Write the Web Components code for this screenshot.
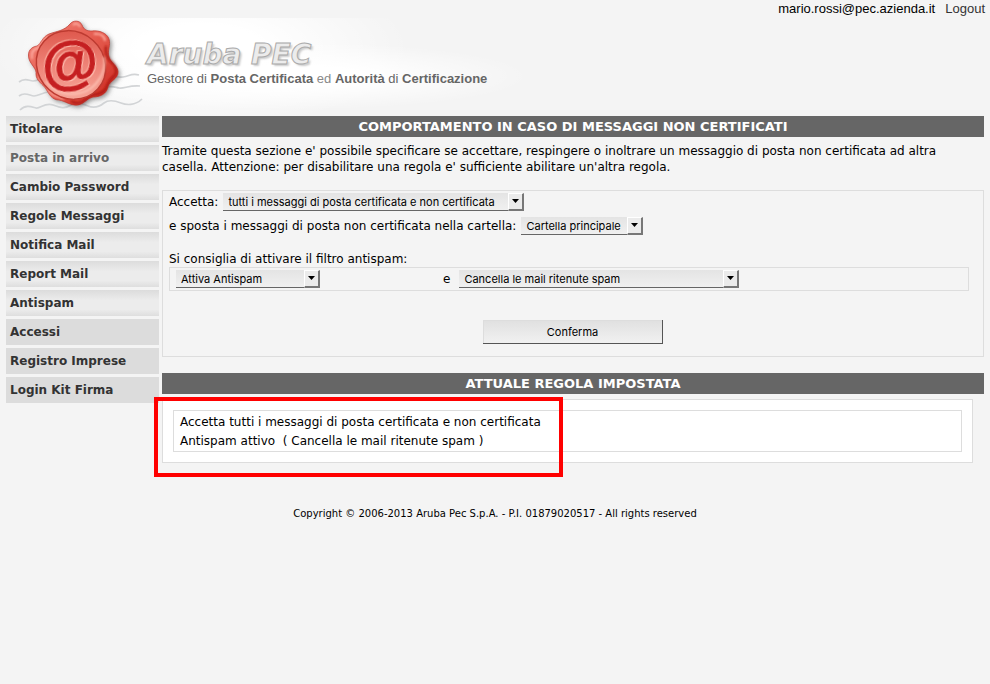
<!DOCTYPE html>
<html lang="it">
<head>
<meta charset="utf-8">
<title>Aruba PEC - Messaggi non certificati</title>
<style>
  body {
    margin: 0;
    background: #f4f4f4;
    color: #000;
    font: 12px/16px Verdana, "DejaVu Sans", sans-serif;
  }
</style>
</head>
<body>

<pec-page>
  <pec-header slot="header" user="mario.rossi@pec.azienda.it"></pec-header>

  <pec-menu slot="menu">
    <pec-menu-item>Titolare</pec-menu-item>
    <pec-menu-item current>Posta in arrivo</pec-menu-item>
    <pec-menu-item>Cambio Password</pec-menu-item>
    <pec-menu-item>Regole Messaggi</pec-menu-item>
    <pec-menu-item>Notifica Mail</pec-menu-item>
    <pec-menu-item>Report Mail</pec-menu-item>
    <pec-menu-item>Antispam</pec-menu-item>
    <pec-menu-item flat>Accessi</pec-menu-item>
    <pec-menu-item flat>Registro Imprese</pec-menu-item>
    <pec-menu-item flat>Login Kit Firma</pec-menu-item>
  </pec-menu>

  <pec-section heading="COMPORTAMENTO IN CASO DI MESSAGGI NON CERTIFICATI">
    <pec-rule-form>
      Tramite questa sezione e' possibile specificare se accettare, respingere o inoltrare un messaggio di posta non certificata ad altra casella. Attenzione: per disabilitare una regola e' sufficiente abilitare un'altra regola.
    </pec-rule-form>
  </pec-section>

  <pec-section heading="ATTUALE REGOLA IMPOSTATA">
    <pec-current-rule>
      <div>Accetta tutti i messaggi di posta certificata e non certificata</div>
      <div>Antispam attivo &nbsp;( Cancella le mail ritenute spam )</div>
    </pec-current-rule>
  </pec-section>

  <span slot="footer">Copyright © 2006-2013 Aruba Pec S.p.A. - P.I. 01879020517 - All rights reserved</span>
</pec-page>

<script>
(function() {

  /**
   * Builds a <template> from a string of markup.
   */
  function html(markup) {
    const template = document.createElement('template');
    template.innerHTML = markup;
    return template;
  }


  /**
   * Base class: attaches an open shadow root and clones the template of the element into it.
   */
  class PecElement extends HTMLElement {
    constructor() {
      super();
      this.attachShadow({ mode: 'open' });
      this.shadowRoot.appendChild(this.constructor.template.content.cloneNode(true));
    }

    $(selector) {
      return this.shadowRoot.querySelector(selector);
    }
  }


  class PecPage extends PecElement {}

  PecPage.template = html(`
    <style>
      :host {
        display: block;
      }
      .columns {
        display: grid;
        grid-template-columns: 153px 1fr;
        gap: 3px;
        padding: 0 6px;
      }
      main {
        display: flex;
        flex-direction: column;
        gap: 16px;
        min-width: 0;
      }
      footer {
        margin-top: 43px;
        text-align: center;
        font-size: 10px;
      }
    </style>
    <slot name="header"></slot>
    <div class="columns">
      <slot name="menu"></slot>
      <main><slot></slot></main>
    </div>
    <footer><slot name="footer"></slot></footer>
  `);


  class PecHeader extends PecElement {
    connectedCallback() {
      this.$('.user').textContent = this.getAttribute('user');
    }
  }

  PecHeader.template = html(`
    <style>
      :host {
        display: block;
        font-family: Arial, "Liberation Sans", sans-serif;
      }
      .account {
        display: flex;
        justify-content: flex-end;
        gap: 10px;
        padding: 1px 5px;
        font-size: 13px;
      }
      .account a {
        color: #333;
        text-decoration: none;
      }
      .brand {
        display: flex;
        gap: 2px;
        height: 98px;
        padding-left: 18px;
        background:
          radial-gradient(240px 34px at 290px 58px, #fff 30%, transparent) no-repeat,
          radial-gradient(210px 80px at 200px 30px, #fff 30%, transparent) no-repeat;
      }
      .name {
        margin: 23px 0 0;
        font: italic bold 28px/28px "DejaVu Sans", sans-serif;
        color: #ececec;
        -webkit-text-stroke: 1px #aaa;
        text-shadow: 2px 2px 2px #ccc;
      }
      .motto {
        margin: 2px 0 0;
        color: #666;
        font-size: 13px;
      }
      .motto span {
        color: #888;
      }
    </style>
    <div class="account">
      <span class="user"></span>
      <a href="#logout">Logout</a>
    </div>
    <div class="brand">
      <pec-seal></pec-seal>
      <div>
        <h1 class="name">Aruba PEC</h1>
        <p class="motto">Gestore di <b>Posta Certificata</b> <span>ed</span> <b>Autorità</b> di <b>Certificazione</b></p>
      </div>
    </div>
  `);


  /**
   * Red wax seal over the waves of a postmark.
   */
  class PecSeal extends PecElement {}

  PecSeal.template = html(`
    <style>
      :host {
        display: block;
        flex: none;
        width: 127px;
        height: 98px;
      }
      svg {
        display: block;
      }
      text {
        fill: #c51f21;
        stroke: #c51f21;
        stroke-width: 1px;
        font: bold 58px Arial, "Liberation Sans", sans-serif;
        filter: drop-shadow(1px 1px 0 #ffc1b3) drop-shadow(-1px -1px 0 #f9ab9c);
      }
    </style>
    <svg width="127" height="98" viewBox="18 18 127 98" aria-hidden="true">
      <defs>
        <linearGradient id="wax" x1="0" y1="0" x2="1" y2="1">
          <stop offset="0" stop-color="#f3857a"/>
          <stop offset=".5" stop-color="#e4594c"/>
          <stop offset="1" stop-color="#c8231a"/>
        </linearGradient>
        <linearGradient id="dish" x1="0" y1="0" x2="1" y2="1">
          <stop offset="0" stop-color="#d8473c"/>
          <stop offset=".5" stop-color="#ee8377"/>
          <stop offset="1" stop-color="#fab6a8"/>
        </linearGradient>
        <filter id="drop" x="-20%" y="-20%" width="150%" height="150%">
          <feDropShadow dx="2" dy="2" stdDeviation="2" flood-color="#555" flood-opacity=".6"/>
        </filter>
        <filter id="soft"><feGaussianBlur stdDeviation="1.2"/></filter>
      </defs>
      <g fill="none" stroke="#d2d4d6" stroke-width="1.7">
        <path d="M19 82c6-5 10-1 14-1s6-2 9-3M19 96c6-5 11 0 15 0s8-3 14-4M20 110c6-6 12-3 16-2s9-6 17-3 12 4 18 0 12-1 17 1 11 1 16-3 12-2 17 0 14 3 21-4"/>
        <path d="M104 88c6-3 10-1 15 0s10-3 21-2M106 77c7-3 10 1 17 0s8-4 16-2"/>
      </g>
      <path filter="url(#drop)" fill="url(#wax)" stroke="#b9362c" stroke-width=".7" d="M70 24C73 20 80 20 82 25C84 30 87 31 92 31C99 30 107 33 109 39C111 45 107 51 109 57C110 62 118 66 118 72C118 79 110 81 108 86C107 94 100 97 93 97C87 98 84 104 78 105C71 106 65 101 59 100C52 100 49 94 46 89C43 84 36 81 36 74C37 69 31 65 29 59C27 51 31 47 37 46C41 44 42 37 49 34C57 31 64 31 70 24Z"/>
      <path filter="url(#soft)" fill="none" stroke="#ffb2a7" stroke-width="1.8" d="M73 25c3-3 6-1 7 2M48 37c-5 3-7 9-10 11-5 1-7 5-6 11M94 34c6-1 11 2 11 7M39 77c3 6 9 8 10 14 4 6 10 6 15 8"/>
      <path filter="url(#soft)" fill="none" stroke="#a9150f" stroke-width="2" d="M106 46c-1 6 1 11 4 15 6 4 8 12 4 15-6 5-6 9-9 14-5 6-14 3-18 8-5 6-12 6-16 3"/>
      <ellipse cx="71" cy="65" rx="36" ry="33" transform="rotate(42 71 65)" fill="url(#dish)" stroke="#bd3b31" stroke-width="1.5"/>
      <path fill="none" stroke="#ffcbbd" stroke-width="1.4" filter="url(#soft)" d="M104 57c3 15-8 33-24 36-14 3-27-1-34-12"/>
      <text x="70" y="82" text-anchor="middle" transform="rotate(-6 70 65)">@</text>
    </svg>
  `);


  class PecMenu extends PecElement {
    connectedCallback() {
      if (!this.hasAttribute('role')) {
        this.setAttribute('role', 'navigation');
      }
    }
  }

  PecMenu.template = html(`
    <style>
      :host {
        display: flex;
        flex-direction: column;
        gap: 3px;
      }
    </style>
    <slot></slot>
  `);


  class PecMenuItem extends PecElement {}

  PecMenuItem.template = html(`
    <style>
      :host {
        display: block;
        background: linear-gradient(#dcdcdc, #ececec 40%, #ececec 75%, #dedede);
        font-weight: bold;
      }
      :host([flat]) {
        background: #dcdcdc;
      }
      a {
        display: block;
        padding: 5px 4px;
        color: #333;
        text-decoration: none;
      }
      :host([current]) a {
        color: #666;
      }
    </style>
    <a href="#"><slot></slot></a>
  `);


  class PecSection extends PecElement {
    connectedCallback() {
      this.$('h2').textContent = this.getAttribute('heading');
    }
  }

  PecSection.template = html(`
    <style>
      :host {
        display: block;
      }
      h2 {
        margin: 0 0 5px;
        padding: 3px 0 2px;
        background: #666;
        color: #fff;
        font-size: 13px;
        text-align: center;
      }
    </style>
    <h2></h2>
    <slot></slot>
  `);


  /**
   * Bevelled drop-down. "label" is drawn before it, "name" is read out when there is no label.
   */
  class PecSelect extends PecElement {
    connectedCallback() {
      const select = this.$('select');
      const label = this.getAttribute('label');

      this.$('label').textContent = label;
      if (!label) {
        this.$('label').remove();
        select.setAttribute('aria-label', this.getAttribute('name'));
      }
      select.add(new Option(this.getAttribute('value')));
    }
  }

  PecSelect.template = html(`
    <style>
      :host {
        display: flex;
        align-items: center;
        gap: 5px;
      }
      .box {
        position: relative;
        width: var(--select-width, auto);
      }
      select {
        appearance: none;
        display: block;
        box-sizing: border-box;
        width: 100%;
        height: 18px;
        margin: 0;
        padding: 0 16px 0 5px;
        border: 0;
        border-bottom: 1px solid #666;
        border-radius: 0;
        background: linear-gradient(#e4e4e4, #f0f0f0);
        color: #000;
        font: 11px/16px "Lucida Grande", Inter, sans-serif;
      }
      .arrow {
        position: absolute;
        top: 0;
        right: 0;
        box-sizing: border-box;
        width: 16px;
        height: 18px;
        border: 1px solid #fff;
        border-right: 2px solid #777;
        border-bottom: 2px solid #777;
        background: #ebebeb;
        pointer-events: none;
      }
      svg {
        display: block;
        margin: 5px 3px;
      }
    </style>
    <label for="select"></label>
    <span class="box">
      <select id="select"></select>
      <span class="arrow"><svg width="7" height="4"><path d="M0 0h7L3.5 4z"/></svg></span>
    </span>
  `);


  class PecRuleForm extends PecElement {}

  PecRuleForm.template = html(`
    <style>
      :host {
        display: block;
        padding-top: 1px;
      }
      p {
        margin: 0 0 15px;
      }
      form {
        display: flex;
        flex-direction: column;
        align-items: flex-start;
        gap: 6px;
        padding: 2px 6px 12px;
        border: 1px solid #ddd;
      }
      .antispam {
        align-self: stretch;
        margin: 10px 8px 0 0;
      }
      .row {
        display: grid;
        grid-template-columns: 267px 1fr;
        padding: 2px 6px;
        border: 1px solid #ddd;
      }
      button {
        align-self: center;
        width: 180px;
        height: 24px;
        margin: 23px 0 0;
        padding: 0;
        border: 0;
        border-right: 1px solid #555;
        border-bottom: 1px solid #555;
        background: linear-gradient(#e0e0e0, #f1f1f1);
        box-shadow: inset 1px 1px #ddd;
        color: #000;
        font: 11px/16px "Lucida Grande", Inter, sans-serif;
      }
      .accept { --select-width: 301px; }
      .folder { --select-width: 122px; }
      .filter { --select-width: 144px; }
      .action { --select-width: 280px; gap: 9px; }
    </style>
    <p><slot></slot></p>
    <form>
      <pec-select class="accept" label="Accetta:" value="tutti i messaggi di posta certificata e non certificata"></pec-select>
      <pec-select class="folder" label="e sposta i messaggi di posta non certificata nella cartella:" value="Cartella principale"></pec-select>
      <div class="antispam">
        <div>Si consiglia di attivare il filtro antispam:</div>
        <div class="row">
          <pec-select class="filter" name="Filtro antispam" value="Attiva Antispam"></pec-select>
          <pec-select class="action" label="e" value="Cancella le mail ritenute spam"></pec-select>
        </div>
      </div>
      <button type="button">Conferma</button>
    </form>
  `);


  class PecCurrentRule extends PecElement {}

  PecCurrentRule.template = html(`
    <style>
      :host {
        display: block;
        position: relative;
        margin-right: 11px;
        padding: 10px;
        border: 1px solid #ddd;
        background: #fff;
      }
      .text {
        padding: 2px 6px 0;
        border: 1px solid #ddd;
        line-height: 19px;
      }
      /* red frame laid over the start of the panel */
      .frame {
        position: absolute;
        top: -3px;
        left: -9px;
        box-sizing: border-box;
        width: 409px;
        height: 80px;
        border: 4px solid #f00;
        pointer-events: none;
      }
    </style>
    <div class="text"><slot></slot></div>
    <div class="frame"></div>
  `);


  window.customElements.define('pec-page', PecPage);
  window.customElements.define('pec-header', PecHeader);
  window.customElements.define('pec-seal', PecSeal);
  window.customElements.define('pec-menu', PecMenu);
  window.customElements.define('pec-menu-item', PecMenuItem);
  window.customElements.define('pec-section', PecSection);
  window.customElements.define('pec-select', PecSelect);
  window.customElements.define('pec-rule-form', PecRuleForm);
  window.customElements.define('pec-current-rule', PecCurrentRule);

})();
</script>
</body>
</html>
